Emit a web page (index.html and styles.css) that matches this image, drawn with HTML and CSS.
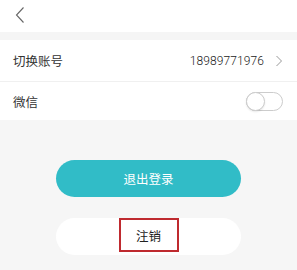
FILE: index.html
```html
<!DOCTYPE html>
<html>
<head>
<meta charset="utf-8">
<link rel="stylesheet" href="styles.css">
</head>
<body>
<div class="page">
  <header class="topbar">
    <svg class="back" width="12" height="18" viewBox="0 0 12 18"><path d="M9.5 1.5 L2.5 9 L9.5 16.5" fill="none" stroke="#666" stroke-width="1.1"/></svg>
  </header>
  <div class="gap"></div>
  <div class="list">
    <div class="row">
      <span class="label">切换账号</span>
      <span class="right">
        <span class="value">18989771976</span>
        <svg class="chev" width="8" height="12" viewBox="0 0 8 12"><path d="M1.5 1 L6.5 6 L1.5 11" fill="none" stroke="#999" stroke-width="1"/></svg>
      </span>
    </div>
    <div class="row">
      <span class="label">微信</span>
      <span class="toggle"><span class="knob"></span></span>
    </div>
  </div>
  <div class="actions">
    <button class="btn primary">退出登录</button>
    <div class="btn secondary"><span class="mark">注销</span></div>
  </div>
</div>
</body>
</html>
```
FILE: styles.css
```css
* { box-sizing: border-box; }
html, body { margin: 0; padding: 0; }
body {
  width: 297px;
  height: 270px;
  overflow: hidden;
  background: #f6f6f6;
  font-family: "Noto Sans CJK SC", "Roboto", sans-serif;
  color: #333;
}
.page { display: flex; flex-direction: column; }
.topbar {
  height: 32px;
  background: #fff;
  display: flex;
  align-items: center;
  padding-left: 14px;
  padding-bottom: 2px;
}
.back { display: block; }
.gap { height: 8px; background: #f5f5f5; }
.list { background: #fff; }
.row {
  height: 41px;
  display: flex;
  align-items: center;
  justify-content: space-between;
  padding: 0 14px 0 13px;
  font-size: 12.5px;
}
.row + .row { border-top: 1px solid #f0f0f0; height: 39px; }
.label { color: #333; }
.right { display: flex; align-items: center; gap: 11px; }
.value { font-family: "Roboto", sans-serif; font-size: 12px; font-weight: 300; color: #222; letter-spacing: 0.1px; }
.chev { display: block; }
.toggle {
  width: 37px;
  height: 19px;
  border: 1px solid #ccc;
  border-radius: 10px;
  position: relative;
  background: #fff;
}
.knob {
  position: absolute;
  left: -1px;
  top: -1px;
  width: 19px;
  height: 19px;
  border-radius: 50%;
  border: 1px solid #ccc;
  background: #fff;
  box-shadow: 0 1px 2px rgba(0,0,0,0.1);
}
.actions {
  display: flex;
  flex-direction: column;
  align-items: center;
  padding-top: 40px;
  gap: 21px;
}
.btn {
  width: 185px;
  height: 37px;
  border-radius: 18.5px;
  border: none;
  font-size: 12.5px;
  font-family: "Noto Sans CJK SC", sans-serif;
  display: flex;
  align-items: center;
  justify-content: center;
  padding: 0;
}
.primary { background: #31bcc7; color: #fff; }
.secondary { background: #fff; color: #222; }
.mark {
  width: 60px;
  height: 34px;
  border: 2px solid #bf2a2f;
  display: flex;
  align-items: center;
  justify-content: center;
  margin-top: -3px;
}
```
